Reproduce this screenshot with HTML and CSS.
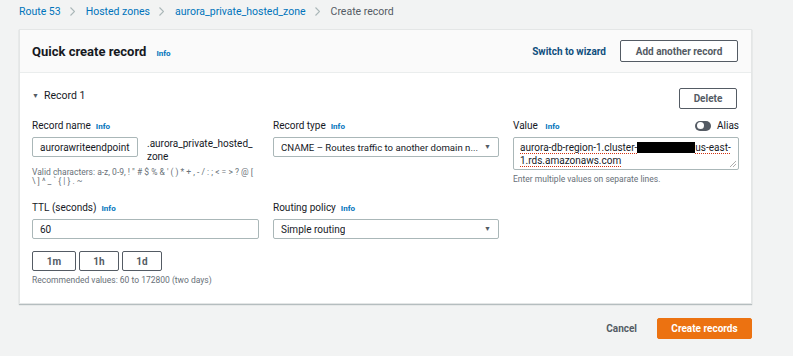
FILE: index.html
```html
<!DOCTYPE html>
<html>
<head>
<meta charset="utf-8">
<link rel="stylesheet" href="styles.css">
</head>
<body>
<nav class="crumbs">
  <a class="crumb">Route 53</a>
  <svg class="sep" width="5" height="9" viewBox="0 0 5 9"><path d="M0.5 0.5L4.5 4.5L0.5 8.5" fill="none" stroke="#aab7b8" stroke-width="1.1"/></svg>
  <a class="crumb">Hosted zones</a>
  <svg class="sep" width="5" height="9" viewBox="0 0 5 9"><path d="M0.5 0.5L4.5 4.5L0.5 8.5" fill="none" stroke="#aab7b8" stroke-width="1.1"/></svg>
  <a class="crumb">aurora_private_hosted_zone</a>
  <svg class="sep" width="5" height="9" viewBox="0 0 5 9"><path d="M0.5 0.5L4.5 4.5L0.5 8.5" fill="none" stroke="#aab7b8" stroke-width="1.1"/></svg>
  <span class="crumb-current">Create record</span>
</nav>
<section class="card">
  <header class="card-head">
    <div class="title"><h1>Quick create record</h1><span class="info">Info</span></div>
    <div class="head-actions">
      <a class="link-btn">Switch to wizard</a>
      <button class="btn add-btn">Add another record</button>
    </div>
  </header>
  <div class="card-body">
    <div class="record-head">
      <div class="record-title"><span class="caret">&#9660;</span>Record 1</div>
      <button class="btn del-btn">Delete</button>
    </div>
    <div class="grid">
      <div class="field">
        <div class="label">Record name <span class="info">Info</span></div>
        <div class="name-row">
          <div class="input name-input">aurorawriteendpoint</div>
          <div class="suffix">.aurora_private_hosted_<br>zone</div>
        </div>
        <div class="hint">Valid characters: a-z, 0-9, ! " # $ % &amp; ' ( ) * + , - / : ; &lt; = &gt; ? @ [<br>\ ] ^ _ ` { | } . ~</div>
      </div>
      <div class="field">
        <div class="label">Record type <span class="info">Info</span></div>
        <div class="input select"><span class="sel-text narrow">CNAME – Routes traffic to another domain n...</span><span class="arrow">&#9660;</span></div>
      </div>
      <div class="field">
        <div class="label value-label"><span>Value <span class="info">Info</span></span><span class="alias"><span class="toggle"><span class="knob"></span></span>Alias</span></div>
        <div class="input textarea"><span class="sq">aurora-db-region-1.cluster-</span><span class="redact"></span><span class="sq">us-east-</span><br><span class="sq">1.rds.amazonaws.com</span>
          <svg class="grip" width="6" height="6" viewBox="0 0 6 6"><path d="M6 0L0 6M6 3L3 6" stroke="#999" stroke-width="0.8"/></svg>
        </div>
        <div class="hint">Enter multiple values on separate lines.</div>
      </div>
      <div class="field">
        <div class="label">TTL (seconds) <span class="info">Info</span></div>
        <div class="input">60</div>
        <div class="ttl-btns">
          <button class="btn ttl">1m</button><button class="btn ttl ttl-h">1h</button><button class="btn ttl ttl-d">1d</button>
        </div>
        <div class="hint">Recommended values: 60 to 172800 (two days)</div>
      </div>
      <div class="field">
        <div class="label">Routing policy <span class="info">Info</span></div>
        <div class="input select"><span class="sel-text">Simple routing</span><span class="arrow">&#9660;</span></div>
      </div>
    </div>
  </div>
</section>
<footer class="actions">
  <a class="cancel">Cancel</a>
  <button class="btn primary">Create records</button>
</footer>
</body>
</html>
```
FILE: styles.css
```css
* { box-sizing: border-box; }
body {
  margin: 0;
  background: #f2f3f3;
  font-family: Roboto, "Liberation Sans", sans-serif;
  color: #16191f;
  font-size: 10px;
  width: 793px;
  height: 356px;
  overflow: hidden;
}
.crumbs {
  height: 25px;
  padding: 0 0 2px 19px;
  display: flex;
  align-items: center;
  font-size: 10.5px;
  line-height: 14px;
}
.crumb { color: #0073bb; }
.crumb-current { color: #545b64; }
.sep { margin: 0 11px 0 9px; }
.card {
  margin: 4px 0 0 19px;
  width: 733px;
  height: 275px;
  background: #fff;
  border: 1px solid #e4e6e6;
  box-shadow: 0 1px 1px rgba(0,28,36,0.25);
}
.card-head {
  height: 43px;
  background: #fafafa;
  border-bottom: 1px solid #eaeded;
  display: flex;
  align-items: center;
  justify-content: space-between;
  padding: 0 13px 0 12px;
}
.title { display: flex; align-items: baseline; }
h1 { margin: 0; font-size: 13px; font-weight: 700; }
.info { color: #0073bb; font-size: 8px; font-weight: 700; margin-left: 10px; }
.label .info { margin-left: 5px; }
.head-actions { display: flex; align-items: center; gap: 14px; }
.link-btn { color: #0f4e7d; font-weight: 700; font-size: 10px; }
.btn {
  font-family: inherit;
  background: #fff;
  border: 1px solid #545b64;
  border-radius: 2px;
  color: #545b64;
  font-weight: 700;
  font-size: 10px;
  padding: 0;
  cursor: pointer;
}
.add-btn { width: 118px; height: 22px; }
.card-body { padding: 14px 14px 0 12px; }
.record-head { display: flex; justify-content: space-between; align-items: center; height: 22px; }
.record-title { font-size: 10.5px; display: flex; align-items: center; margin-bottom: 5px; }
.caret { font-size: 7px; margin-right: 5px; color: #545b64; }
.del-btn { width: 58px; height: 21px; }
.grid {
  margin-top: 10px;
  display: grid;
  grid-template-columns: 227px 226px 226px;
  column-gap: 14px;
  row-gap: 15px;
}
.field { display: flex; flex-direction: column; }
.label { font-size: 10px; line-height: 13px; height: 13px; margin-bottom: 5px; display: flex; align-items: baseline; }
.value-label { justify-content: space-between; align-items: center; }
.alias { display: flex; align-items: center; font-size: 10px; }
.toggle {
  width: 16px; height: 10px; border-radius: 5px; background: #545b64;
  position: relative; margin-right: 6px;
}
.knob { position: absolute; left: 1.5px; top: 1.5px; width: 7px; height: 7px; border-radius: 50%; background: #fff; }
.input {
  height: 20px;
  border: 1px solid #aab7b8;
  border-radius: 2px;
  padding: 0 7px;
  display: flex;
  align-items: center;
  font-size: 10px;
  color: #16191f;
  white-space: nowrap;
}
.name-row { display: flex; align-items: flex-start; }
.name-input { width: 106px; padding: 0 7px; }
.suffix { margin-left: 9px; font-size: 10px; line-height: 13px; padding-top: 0; }
.hint { font-size: 8.5px; color: #687078; line-height: 9px; margin-top: 5px; }
.select { justify-content: space-between; }
.sel-text { overflow: hidden; }
.narrow { font-size: 9.6px; }
.arrow { font-size: 7px; color: #545b64; }
.textarea {
  height: 33px;
  display: block;
  padding: 3px 6px;
  line-height: 13px;
  font-size: 10px;
  position: relative;
  overflow: hidden;
}
.sq { text-decoration: underline dotted #d13212; text-underline-offset: 2px; }
.redact { display: inline-block; width: 58px; height: 11px; background: #000; vertical-align: -2px; }
.grip { position: absolute; right: 2px; bottom: 2px; }
.ttl-btns { display: flex; gap: 3px; margin-top: 12px; }
.ttl { width: 44px; height: 20px; }
.ttl-h { width: 40px; }
.ttl-d { width: 40px; }
.actions {
  display: flex;
  justify-content: flex-end;
  align-items: center;
  padding: 14px 41px 0 0;
  gap: 20px;
}
.cancel { color: #545b64; font-weight: 700; font-size: 10px; }
.primary {
  background: #ec7211;
  border-color: #ec7211;
  color: #fff;
  width: 95px;
  height: 21px;
}
```
